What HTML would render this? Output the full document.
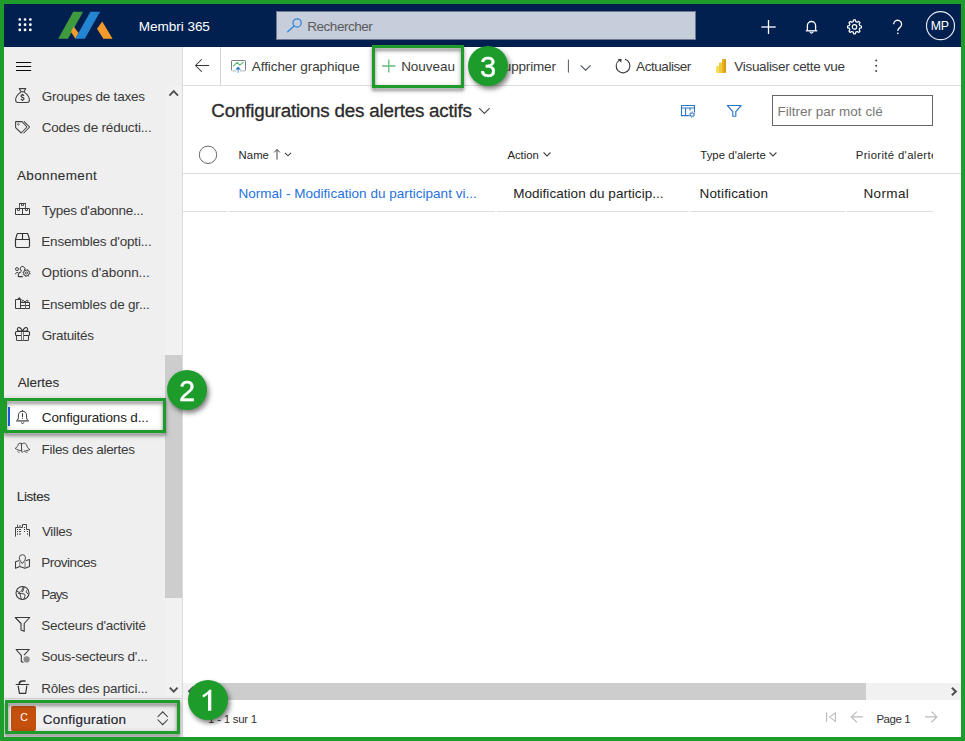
<!DOCTYPE html>
<html><head><meta charset="utf-8">
<style>
*{box-sizing:border-box;margin:0;padding:0}
html,body{width:965px;height:741px;overflow:hidden;background:#1d9c2c;font-family:"Liberation Sans",sans-serif;}
#app{position:absolute;left:0;top:0;width:965px;height:741px;overflow:hidden}
.b{position:absolute}
.t{position:absolute;white-space:nowrap;line-height:20px;height:20px}
svg{position:absolute;overflow:visible}
.badge{position:absolute;width:40px;height:40px;border-radius:50%;background:#1d9c2c;color:#fff;font-size:29px;text-align:center;line-height:42.4px;-webkit-text-stroke:0.35px #fff;will-change:transform;box-shadow:2px 3px 5px rgba(0,0,0,.5)}
.gbox{position:absolute;border:3px solid #1d9c2c;filter:drop-shadow(0.3px 3.2px 1.6px rgba(0,0,0,.3)) drop-shadow(0px 1px 2.5px rgba(0,0,0,.24));}
</style></head><body>
<div id="app">
<div class="b" style="left:4px;top:4px;width:957px;height:733px;background:#fff"></div>
<!-- top bar -->
<div class="b" style="left:4px;top:4px;width:957px;height:43px;background:#011f4f"></div>
<div class="b" style="left:276px;top:11px;width:420px;height:29px;background:#c6cddb;border:1px solid #6f7890"></div>
<!-- sidebar -->
<div class="b" style="left:4px;top:47px;width:178px;height:690px;background:#efefef"></div>
<div class="b" style="left:165px;top:85px;width:17px;height:615px;background:#f1f1f1"></div>
<div class="b" style="left:165px;top:355px;width:17.3px;height:242.6px;background:#cdcdcd"></div><div class="b" style="left:182px;top:47px;width:1px;height:690px;background:rgba(170,170,170,.42)"></div>
<div class="b" style="left:4px;top:698px;width:178px;height:1px;background:#d6d6d6"></div>
<div class="b" style="left:7px;top:401px;width:158px;height:29px;background:#fff"></div>
<div class="b" style="left:8px;top:406.8px;width:2.3px;height:19.2px;background:#1f5ff0"></div>
<div class="b" style="left:11px;top:706.2px;width:24.8px;height:24.6px;background:#c4500c;border-radius:2px"></div>
<!-- command bar -->
<div class="b" style="left:183px;top:85px;width:778px;height:1px;background:#dedede"></div>
<div class="b" style="left:220px;top:47px;width:1px;height:38px;background:#d4d4d4"></div>
<!-- grid -->
<div class="b" style="left:772px;top:95px;width:161px;height:31px;border:1px solid #666;background:#fff"></div>
<div class="b" style="left:183px;top:173px;width:778px;height:1px;background:#dcdcdc"></div>
<div class="b" style="left:183px;top:211px;width:750px;height:1px;background:#e0dedc"></div><div class="b" style="left:227px;top:211px;width:2px;height:1px;background:#fbfbfb"></div><div class="b" style="left:495px;top:211px;width:2px;height:1px;background:#fbfbfb"></div><div class="b" style="left:688px;top:211px;width:2px;height:1px;background:#fbfbfb"></div><div class="b" style="left:845px;top:211px;width:2px;height:1px;background:#fbfbfb"></div>
<!-- h scroll -->
<div class="b" style="left:183px;top:683px;width:778px;height:17px;background:#f1f1f1"></div>
<div class="b" style="left:200px;top:683px;width:666px;height:17px;background:#cdcdcd"></div>
<svg style="left:0px;top:0px" width="60" height="47" viewBox="0 0 60 47" ><rect x="18.45" y="18.15" width="2.6" height="2.6" rx="1.0" fill="#fff"/><rect x="18.45" y="23.35" width="2.6" height="2.6" rx="1.0" fill="#fff"/><rect x="18.45" y="28.55" width="2.6" height="2.6" rx="1.0" fill="#fff"/><rect x="23.75" y="18.15" width="2.6" height="2.6" rx="1.0" fill="#fff"/><rect x="23.75" y="23.35" width="2.6" height="2.6" rx="1.0" fill="#fff"/><rect x="23.75" y="28.55" width="2.6" height="2.6" rx="1.0" fill="#fff"/><rect x="29.05" y="18.15" width="2.6" height="2.6" rx="1.0" fill="#fff"/><rect x="29.05" y="23.35" width="2.6" height="2.6" rx="1.0" fill="#fff"/><rect x="29.05" y="28.55" width="2.6" height="2.6" rx="1.0" fill="#fff"/></svg>
<svg style="left:0px;top:0px" width="130" height="47" viewBox="0 0 130 47" ><polygon points="58.2,38.8 73.2,11.8 83.1,11.8 68,38.8" fill="#3f9a3d"/>
<polygon points="71,32 73.6,26.5 78.6,33 75.4,38.8" fill="#f39a2c"/>
<polygon points="75.2,38.8 90.4,11.8 100.1,11.8 84.8,38.8" fill="#2384d1"/>
<polygon points="102.2,21.6 112.6,38.8 103.4,38.8 97,28.8" fill="#f39a2c"/></svg>
<svg style="left:285px;top:17px" width="20" height="20" viewBox="0 0 20 20" ><circle cx="12.1" cy="5.9" r="4.1" fill="none" stroke="#2f86dc" stroke-width="1.25"/><path d="M9.1 8.9 L2.7 14.7" stroke="#2f86dc" stroke-width="1.3" stroke-linecap="round"/></svg>
<svg style="left:758px;top:17px" width="22" height="22" viewBox="0 0 22 22" ><path d="M10.5 3 V17" stroke="#fff" stroke-width="1.3"/><path d="M3.3 10 H17.7" stroke="#fff" stroke-width="1.3"/></svg>
<svg style="left:801px;top:16px" width="22" height="22" viewBox="0 0 22 22" ><path d="M6.4 14.6 V9.6 a4.1 4.1 0 0 1 8.2 0 V14.6" fill="none" stroke="#fff" stroke-width="1.3"/><path d="M4.8 14.8 H16.3" stroke="#fff" stroke-width="1.3"/><path d="M9 15.6 a1.55 1.55 0 0 0 3.1 0" fill="none" stroke="#fff" stroke-width="1.2"/></svg>
<svg style="left:844px;top:16px" width="22" height="22" viewBox="0 0 22 22" ><path d="M15.75 9.64 L17.44 9.97 L17.44 11.83 L15.75 12.16 L15.10 13.72 L16.06 15.15 L14.75 16.46 L13.32 15.50 L11.76 16.15 L11.43 17.84 L9.57 17.84 L9.24 16.15 L7.68 15.50 L6.25 16.46 L4.94 15.15 L5.90 13.72 L5.25 12.16 L3.56 11.83 L3.56 9.97 L5.25 9.64 L5.90 8.08 L4.94 6.65 L6.25 5.34 L7.68 6.30 L9.24 5.65 L9.57 3.96 L11.43 3.96 L11.76 5.65 L13.32 6.30 L14.75 5.34 L16.06 6.65 L15.10 8.08 Z" fill="none" stroke="#fff" stroke-width="1.2" stroke-linejoin="round"/><circle cx="10.5" cy="10.9" r="2.2" fill="none" stroke="#fff" stroke-width="1.2"/></svg>
<svg style="left:888px;top:16px" width="20" height="22" viewBox="0 0 20 22" ><path d="M5.6 8.2 a4 4 0 1 1 6.2 3.4 c-1.5 1 -2 1.6 -2 3.4" fill="none" stroke="#fff" stroke-width="1.3"/><rect x="9.1" y="16.6" width="1.4" height="1.5" fill="#fff"/></svg>
<svg style="left:924px;top:9px" width="34" height="34" viewBox="0 0 34 34" ><circle cx="16.5" cy="16.7" r="14" fill="none" stroke="#e4e7ee" stroke-width="1.2"/></svg>
<svg style="left:190px;top:55px" width="24" height="22" viewBox="0 0 24 22" ><path d="M5.6 10.5 H18.7 M11.5 4.5 L5.5 10.5 L11.5 16.5" fill="none" stroke="#333" stroke-width="1.05" stroke-linecap="round" stroke-linejoin="round"/></svg>
<svg style="left:229px;top:57px" width="20" height="20" viewBox="0 0 20 20" ><path d="M3.1 13.5 Q2.5 13.5 2.5 12.9 V4.1 Q2.5 3.5 3.1 3.5 H15.9 Q16.5 3.5 16.5 4.1 V12.9 Q16.5 13.5 15.9 13.5" fill="none" stroke="#7d7d7d" stroke-width="1"/><path d="M3.4 13.8 H7.2 M11 13.8 H15.6" stroke="#c2c2c2" stroke-width="1.3"/><path d="M4.1 9.4 L8.2 5.4 L10.8 8.2 L14.6 5.1" fill="none" stroke="#4cb86e" stroke-width="1.05" stroke-linejoin="round"/><rect x="8.5" y="11.6" width="1.3" height="4.3" fill="#7ab2e8"/><path d="M9.15 9.7 L11.4 12.3 H6.9 Z" fill="#2f74c4" stroke="#2f74c4" stroke-width="0.5" stroke-linejoin="round"/></svg>
<svg style="left:380px;top:57px" width="18" height="18" viewBox="0 0 18 18" ><path d="M8.8 2.4 V15.6 M2.2 9 H15.4" stroke="#62bb7a" stroke-width="1.3" fill="none"/></svg>
<svg style="left:564px;top:55px" width="30" height="22" viewBox="0 0 30 22" ><path d="M4.4 4.6 V17.6" stroke="#555" stroke-width="1"/><path d="M16.6 10.4 L21.6 15.2 L26.6 10.4" fill="none" stroke="#4a5262" stroke-width="1.1"/></svg>
<svg style="left:613px;top:56px" width="20" height="20" viewBox="0 0 20 20" ><path d="M11.9 3.3 A6.9 6.9 0 1 1 6.4 4.1" fill="none" stroke="#363636" stroke-width="1.08"/><path d="M4.7 3 L8.5 3 L8.3 6.7 Z" fill="#363636"/></svg>
<svg style="left:714px;top:57px" width="14" height="18" viewBox="0 0 14 18" ><defs><linearGradient id="pb1" x1="0" x2="1" y1="0" y2="0"><stop offset="0" stop-color="#ebb822"/><stop offset="1" stop-color="#d8960c"/></linearGradient></defs><rect x="2" y="9" width="4.2" height="6.9" rx="0.7" fill="#f6dc62"/><rect x="5" y="5.4" width="4.1" height="10.5" rx="0.7" fill="#f2ca3e"/><rect x="8" y="1.9" width="4" height="14" rx="0.8" fill="url(#pb1)"/></svg>
<svg style="left:872.5px;top:58.4px" width="8" height="16" viewBox="0 0 8 16" ><circle cx="3.2" cy="2.6" r="1" fill="#444"/><circle cx="3.2" cy="7.8" r="1" fill="#444"/><circle cx="3.2" cy="13" r="1" fill="#444"/></svg>
<svg style="left:14px;top:58px" width="20" height="16" viewBox="0 0 20 16" ><rect x="2" y="4" width="15.2" height="1" fill="#0a0a0a"/><rect x="2" y="8" width="15.2" height="1" fill="#0a0a0a"/><rect x="2" y="12" width="15.2" height="1" fill="#0a0a0a"/></svg>
<svg style="left:167px;top:87px" width="14" height="12" viewBox="0 0 14 12" ><path d="M2.4 8.6 L6.7 4.2 L11 8.6" fill="none" stroke="#505050" stroke-width="1.9"/></svg>
<svg style="left:167px;top:684px" width="14" height="12" viewBox="0 0 14 12" ><path d="M2.8 3.6 L6.7 7.6 L10.6 3.6" fill="none" stroke="#505050" stroke-width="1.9"/></svg>
<svg style="left:13px;top:86px" width="20" height="20" viewBox="0 0 20 20" ><path d="M6.2 2.6 H12.8 L11 5.8 H8 Z" fill="none" stroke="#404040" stroke-width="1.05" stroke-linejoin="round" stroke-linecap="round"/><path d="M8 5.8 C5 8 2.6 11.4 2.6 14 C2.6 15.8 3.6 16.4 5 16.4 H14 C15.4 16.4 16.4 15.8 16.4 14 C16.4 11.4 14 8 11 5.8" fill="none" stroke="#404040" stroke-width="1.05" stroke-linejoin="round" stroke-linecap="round"/><path d="M10.9 9.9 C10.6 9.1 10 8.9 9.4 8.9 C8.4 8.9 8 9.5 8 10.1 C8 10.9 8.6 11.2 9.5 11.4 C10.4 11.6 11 12 11 12.8 C11 13.5 10.4 14 9.4 14 C8.6 14 8.1 13.6 7.9 12.9" fill="none" stroke="#333" stroke-width="1.1"/><path d="M9.45 7.9 V9 M9.45 13.9 V15" stroke="#333" stroke-width="1"/></svg>
<svg style="left:13px;top:119px" width="20" height="18" viewBox="0 0 20 18" ><path d="M2.6 2.6 H9 L14 8 L8.2 14 L2.6 8.6 Z" fill="none" stroke="#404040" stroke-width="1.05" stroke-linejoin="round" stroke-linecap="round"/><path d="M11.2 2.6 L16.6 8 L10.8 14" fill="none" stroke="#404040" stroke-width="1.05" stroke-linejoin="round" stroke-linecap="round"/><circle cx="5.4" cy="5.4" r="0.8" fill="none" stroke="#3b3b3b" stroke-width="0.7"/></svg>
<svg style="left:13px;top:201px" width="20" height="16" viewBox="0 0 20 16" ><path d="M6.5 7 V2.5 H12.5 V7" fill="none" stroke="#5a5a5a" stroke-width="1"/><path d="M6 2.5 H13" fill="none" stroke="#3c3c3c" stroke-width="1"/><path d="M2.5 7.5 H16.5 V13.5 H2.5 Z M9.5 7.5 V13.5" fill="none" stroke="#3c3c3c" stroke-width="1"/><path d="M8.5 3 V4.5 H10.5 V3 M4.5 8 V9.5 H6.5 V8 M12.5 8 V9.5 H14.5 V8" fill="none" stroke="#4a4a4a" stroke-width="1"/></svg>
<svg style="left:13px;top:231px" width="20" height="20" viewBox="0 0 20 20" ><path d="M2.5 8.5 L4 3.3 Q4.2 2.5 5 2.5 H14 Q14.8 2.5 15 3.3 L16.5 8.5 V15 Q16.5 16.5 15 16.5 H4 Q2.5 16.5 2.5 15 Z M2.5 8.5 H16.5 M9.5 2.5 V8.5" fill="none" stroke="#333" stroke-width="1.15" stroke-linejoin="round"/></svg>
<svg style="left:13px;top:264px" width="20" height="16" viewBox="0 0 20 16" ><circle cx="4.0" cy="5.1" r="1.5" fill="none" stroke="#3b3b3b" stroke-width="0.95"/><path d="M2.3 9.9 Q2.7 8.3 4.8 8.3" fill="none" stroke="#3b3b3b" stroke-width="0.95" stroke-linecap="round"/><path d="M11.2 6.3 A2.3 2.3 0 1 0 9.0 7.0" fill="none" stroke="#3b3b3b" stroke-width="1"/><path d="M9.8 12.6 H5.3 V10.6 Q5.5 8.5 8.2 7.8" fill="none" stroke="#3b3b3b" stroke-width="1.05" stroke-linejoin="round"/><circle cx="13.5" cy="9" r="2.9" fill="#efefef" stroke="#3b3b3b" stroke-width="0.95"/><circle cx="13.5" cy="9" r="3.6" fill="none" stroke="#3b3b3b" stroke-width="0.8" stroke-dasharray="1.25 1.58"/><circle cx="13.5" cy="9" r="1.1" fill="none" stroke="#3b3b3b" stroke-width="0.85"/></svg>
<svg style="left:13px;top:295px" width="20" height="16" viewBox="0 0 20 16" ><path d="M2.5 13.5 V4.5 H7.5 V13.5 M2.5 13.5 H16.5" fill="none" stroke="#3c3c3c" stroke-width="1"/><path d="M3.6 4.7 L6.2 2.1 L9 5 Z" fill="#444"/><path d="M7.5 7.5 H16.5 V13.5 M7.5 10.5 H16.5" fill="none" stroke="#3c3c3c" stroke-width="1"/><path d="M12.5 7.5 V13.5" fill="none" stroke="#6a6a6a" stroke-width="1"/><path d="M12 7.3 C11 5 9 4.8 8.8 6 C8.7 6.8 9.5 7.3 12 7.3 C13 5 15 4.8 15.2 6 C15.3 6.8 14.5 7.3 12 7.3" fill="none" stroke="#3c3c3c" stroke-width="1"/></svg>
<svg style="left:13px;top:325px" width="20" height="20" viewBox="0 0 20 20" ><path d="M3.5 6.5 H15.5 Q16.5 6.5 16.5 7.5 V9.5 Q16.5 10.5 15.5 10.5 H11 M8 10.5 H3.5 Q2.5 10.5 2.5 9.5 V7.5 Q2.5 6.5 3.5 6.5" fill="none" stroke="#333" stroke-width="1.1"/><path d="M3.5 10.5 V14.5 Q3.5 15.5 4.5 15.5 H14.5 Q15.5 15.5 15.5 14.5 V10.5" fill="none" stroke="#444" stroke-width="1.05"/><path d="M8.5 6.5 V15.5 M10.5 6.5 V15.5" fill="none" stroke="#757575" stroke-width="1"/><path d="M9.5 6.3 C8.5 4 7 2.3 5.8 2.5 C4.4 2.8 4 4.6 4.6 5.4 C5.2 6.2 6.5 6.4 9.5 6.3 M9.5 6.3 C10.5 4 12 2.3 13.2 2.5 C14.6 2.8 15 4.6 14.4 5.4 C13.8 6.2 12.5 6.4 9.5 6.3" fill="none" stroke="#333" stroke-width="1.05"/></svg>
<svg style="left:13px;top:408px" width="20" height="18" viewBox="0 0 20 18" ><path d="M3.9 12.4 C5 11.8 5.4 10.8 5.4 9.6 V7.4 a4.1 4.1 0 0 1 8.2 0 V9.6 C13.6 10.8 14 11.8 15.1 12.4" fill="none" stroke="#454545" stroke-width="1.05" stroke-linejoin="round"/><path d="M3.7 12.9 H15.3" stroke="#7a7a7a" stroke-width="1.6" stroke-linecap="round"/><path d="M8.3 14.3 a1.25 1.25 0 0 0 2.5 0" fill="none" stroke="#454545" stroke-width="1"/><path d="M9.5 5.3 V9.0" stroke="#333" stroke-width="1.1"/><circle cx="9.5" cy="10.3" r="0.6" fill="#333"/><path d="M9.5 2.1 V3.4" stroke="#454545" stroke-width="1"/></svg>
<svg style="left:13px;top:440px" width="20" height="16" viewBox="0 0 20 16" ><path d="M8.4 3.4 C6.6 2.6 5.2 3.6 4.8 5.4 C4.4 7 3.6 7.8 2.1 8.4 C3.6 9.6 5.8 10.2 7.9 10.7 M8.3 3.4 C8.4 6 8.5 9 8.7 11.5 M8.5 5.2 C8.8 3.6 10 2.9 11.3 3.1 C13 3.4 13.6 4.8 14 6.2 C14.5 7.8 15.4 8.8 16.9 9.5 C15.4 10.4 13 10.9 10.9 11.2" fill="none" stroke="#484848" stroke-width="1" stroke-linejoin="round" stroke-linecap="round"/><path d="M4.6 11.6 Q5.2 12.6 6.3 12.2 M12.4 12 Q13.2 12.8 14.3 12.3" fill="none" stroke="#555" stroke-width="0.9" stroke-linecap="round"/><circle cx="9.4" cy="12.2" r="0.6" fill="#555"/></svg>
<svg style="left:13px;top:522px" width="20" height="18" viewBox="0 0 20 18" ><path d="M2.5 14.6 V5.5 H9.5 V2.5 H13.5 V7.5 H16.5 V14.6" fill="none" stroke="#454545" stroke-width="1"/><path d="M4.5 5.5 V2.6" stroke="#5a5a5a" stroke-width="1"/><path d="M6.5 5.5 V3.2 M7.7 5.5 V3.2" stroke="#8a8a8a" stroke-width="1"/><rect x="4" y="7" width="1" height="1" fill="#333"/><rect x="4" y="9" width="1" height="1" fill="#333"/><rect x="4" y="11" width="1" height="2" fill="#777"/><rect x="6" y="7" width="2" height="1" fill="#555"/><rect x="6" y="9" width="2" height="1" fill="#555"/><rect x="6" y="11" width="2" height="2" fill="#999"/><rect x="11" y="5" width="1" height="1" fill="#333"/><rect x="11" y="7" width="1" height="1" fill="#333"/><rect x="11" y="9" width="1" height="1" fill="#444"/><rect x="14" y="9" width="1" height="1" fill="#333"/><rect x="14" y="11" width="1" height="2" fill="#777"/></svg>
<svg style="left:13px;top:553px" width="20" height="18" viewBox="0 0 20 18" ><path d="M6.4 7.6 L2.5 8.7 V15.3 L6.8 13.4 L12 15.2 L16.5 13.6 V6.6 L12.6 7.7" fill="none" stroke="#404040" stroke-width="1.05" stroke-linejoin="round"/><path d="M6.8 8.6 V13.4 M12 8.6 V15.2" stroke="#7a7a7a" stroke-width="1"/><path d="M9.4 10.6 C7.8 8.4 6.3 6.6 6.3 4.8 A3.1 3.1 0 0 1 12.5 4.8 C12.5 6.6 11 8.4 9.4 10.6 Z" fill="#efefef" stroke="#4a4a4a" stroke-width="1"/></svg>
<svg style="left:13px;top:583px" width="20" height="20" viewBox="0 0 20 20" ><circle cx="9.5" cy="10" r="6.5" fill="none" stroke="#3b3b3b" stroke-width="1.1"/><path d="M10.2 3.8 C9.6 6.4 8.6 8 7 9.4 C5.6 9.3 4.4 8.7 3.3 7.8 M11.2 4 C10.6 6 10.2 7.6 9.3 9.2 M5 10.3 C7.5 10.7 9.6 10.3 11.7 11.3 C12.5 12.6 11.5 14.6 10.7 16.3 M6.8 10.7 C7.4 12.6 8 14.6 8.3 16.3 M13.7 7.4 C12.8 8.5 13 10 15.2 10.7" fill="none" stroke="#3b3b3b" stroke-width="1"/></svg>
<svg style="left:13px;top:615px" width="20" height="20" viewBox="0 0 20 20" ><path d="M2.3 2.5 H16.7 L11.2 8.5 V16.3 L8 14.9 V8.5 Z" fill="none" stroke="#383838" stroke-width="1.1" stroke-linejoin="round"/></svg>
<svg style="left:13px;top:647px" width="20" height="20" viewBox="0 0 20 20" ><path d="M11 8.2 L16.2 2.5 H3 L8.3 8.4 V14.4 L10.4 15.6" fill="none" stroke="#383838" stroke-width="1.1" stroke-linejoin="round"/><circle cx="13.6" cy="12.4" r="3.1" fill="#8c8c8c"/></svg>
<svg style="left:13px;top:678px" width="20" height="18" viewBox="0 0 20 18" ><path d="M3.2 6.45 H15.7" stroke="#333" stroke-width="1.15" stroke-linecap="round"/><path d="M6.2 6.2 C6.2 4 7.6 3.1 9.4 3.05 H12" fill="none" stroke="#333" stroke-width="1.5" stroke-linecap="round"/><path d="M5.2 8.2 L6.4 15 Q6.5 15.4 7 15.4 H12.2 Q12.7 15.4 12.8 15 L13.8 8.2" fill="none" stroke="#333" stroke-width="1.2" stroke-linecap="round"/></svg>
<svg style="left:155px;top:709px" width="16" height="20" viewBox="0 0 16 20" ><path d="M2.6 8 L7.7 2.8 L12.8 8 M2.6 10.5 L7.7 15.7 L12.8 10.5" fill="none" stroke="#3b3b3b" stroke-width="1.05"/></svg>
<svg style="left:476px;top:104px" width="16" height="14" viewBox="0 0 16 14" ><path d="M3.2 4.2 L8.4 9.4 L13.6 4.2" fill="none" stroke="#444" stroke-width="1.05"/></svg>
<svg style="left:678px;top:102px" width="20" height="18" viewBox="0 0 20 18" ><path d="M11.4 13.6 H3.5 V3.5 H16.5 V10.6 M3.5 6 H16.5 M7.6 6 V13.6 M12 6 V8.6" fill="none" stroke="#2d76c4" stroke-width="1.1"/><circle cx="14" cy="12.6" r="1.75" fill="#fff" stroke="#2d76c4" stroke-width="1.0"/><circle cx="14" cy="12.6" r="2.7" fill="none" stroke="#2d76c4" stroke-width="0.9" stroke-dasharray="0.95 1.17"/></svg>
<svg style="left:724px;top:102px" width="20" height="18" viewBox="0 0 20 18" ><path d="M3.4 3.5 H17.2 L11.8 9.6 V14.2 H8.8 V9.6 Z" fill="none" stroke="#2d76c4" stroke-width="1.15" stroke-linejoin="round"/></svg>
<svg style="left:197px;top:144px" width="22" height="22" viewBox="0 0 22 22" ><circle cx="11" cy="10.8" r="8.7" fill="none" stroke="#6a6a6a" stroke-width="1"/></svg>
<svg style="left:270px;top:146px" width="26" height="18" viewBox="0 0 26 18" ><path d="M7 13.6 V3.6 M4.2 6.4 L7 3.4 L9.8 6.4" fill="none" stroke="#444" stroke-width="1"/><path d="M15 6.8 L18 9.8 L21 6.8" fill="none" stroke="#444" stroke-width="1.1"/></svg>
<svg style="left:540px;top:146px" width="14" height="18" viewBox="0 0 14 18" ><path d="M3.6 6.5 L7 9.9 L10.4 6.5" fill="none" stroke="#444" stroke-width="1.1"/></svg>
<svg style="left:766px;top:146px" width="14" height="18" viewBox="0 0 14 18" ><path d="M3.6 6.5 L7 9.9 L10.4 6.5" fill="none" stroke="#444" stroke-width="1.1"/></svg>
<svg style="left:822px;top:708px" width="18" height="18" viewBox="0 0 18 18" ><path d="M4.6 4.4 V13.8" stroke="#bcbcbc" stroke-width="1.2"/><path d="M13.4 4.8 L7.6 9.1 L13.4 13.4 Z" fill="none" stroke="#bcbcbc" stroke-width="1.1" stroke-linejoin="round"/></svg>
<svg style="left:848px;top:708px" width="18" height="18" viewBox="0 0 18 18" ><path d="M3.4 8.9 H14.8 M8.8 3.6 L3.4 8.9 L8.8 14.2" fill="none" stroke="#bcbcbc" stroke-width="1.2"/></svg>
<svg style="left:922px;top:708px" width="18" height="18" viewBox="0 0 18 18" ><path d="M3 8.9 H14.8 M9.4 3.6 L14.8 8.9 L9.4 14.2" fill="none" stroke="#bcbcbc" stroke-width="1.2"/></svg>
<svg style="left:184px;top:684px" width="14" height="14" viewBox="0 0 14 14" ><path d="M9.4 2.8 L5 7.2 L9.4 11.6" fill="none" stroke="#505050" stroke-width="1.9"/></svg>
<svg style="left:946px;top:684px" width="14" height="14" viewBox="0 0 14 14" ><path d="M5.9 3.7 L9.8 7.5 L5.9 11.3" fill="none" stroke="#505050" stroke-width="2.1"/></svg>
<div class="t" id="t_app" style="left:138.83px;top:16.50px;font-size:13.6px;color:#ffffff;letter-spacing:-0.074px;">Membri 365</div>
<div class="t" id="t_search" style="left:307.22px;top:16.60px;font-size:13.5px;color:#5a5a5a;letter-spacing:-0.460px;">Rechercher</div>
<div class="t" id="t_mp" style="left:930.78px;top:15.80px;font-size:12.4px;color:#ffffff;letter-spacing:-0.355px;">MP</div>
<div class="t" id="c_aff" style="left:251.87px;top:57.30px;font-size:13.5px;color:#3a3a3a;letter-spacing:-0.086px;">Afficher graphique</div>
<div class="t" id="c_nou" style="left:401.13px;top:57.30px;font-size:13.5px;color:#3a3a3a;letter-spacing:-0.016px;">Nouveau</div>
<div class="t" id="c_sup" style="left:495.02px;top:57.30px;font-size:13.5px;color:#3a3a3a;letter-spacing:-0.168px;">Supprimer</div>
<div class="t" id="c_act" style="left:636.11px;top:57.30px;font-size:13.5px;color:#3a3a3a;letter-spacing:-0.449px;">Actualiser</div>
<div class="t" id="c_vis" style="left:734.36px;top:57.30px;font-size:13.5px;color:#3a3a3a;letter-spacing:-0.329px;">Visualiser cette vue</div>
<div class="t" id="n1" style="left:41.65px;top:86.60px;font-size:13.5px;color:#3a3a3a;letter-spacing:-0.213px;">Groupes de taxes</div>
<div class="t" id="n2" style="left:41.70px;top:117.50px;font-size:13.5px;color:#3a3a3a;letter-spacing:-0.185px;">Codes de réducti...</div>
<div class="t" id="g1" style="left:16.88px;top:166.20px;font-size:13.5px;color:#2e2e2e;letter-spacing:0.369px;-webkit-text-stroke:0.08px #2e2e2e;">Abonnement</div>
<div class="t" id="n3" style="left:42.04px;top:201.20px;font-size:13.5px;color:#3a3a3a;letter-spacing:-0.279px;">Types d'abonne...</div>
<div class="t" id="n4" style="left:41.23px;top:232.40px;font-size:13.5px;color:#3a3a3a;letter-spacing:-0.177px;">Ensembles d'opti...</div>
<div class="t" id="n5" style="left:41.59px;top:263.00px;font-size:13.5px;color:#3a3a3a;letter-spacing:-0.060px;">Options d'abonn...</div>
<div class="t" id="n6" style="left:41.23px;top:295.00px;font-size:13.5px;color:#3a3a3a;letter-spacing:-0.192px;">Ensembles de gr...</div>
<div class="t" id="n7" style="left:41.65px;top:326.30px;font-size:13.5px;color:#3a3a3a;letter-spacing:-0.310px;">Gratuités</div>
<div class="t" id="g2" style="left:17.71px;top:373.40px;font-size:13.5px;color:#2e2e2e;letter-spacing:-0.088px;-webkit-text-stroke:0.08px #2e2e2e;">Alertes</div>
<div class="t" id="n8" style="left:41.85px;top:408.30px;font-size:13.5px;color:#222;letter-spacing:-0.152px;">Configurations d...</div>
<div class="t" id="n9" style="left:41.58px;top:440.20px;font-size:13.5px;color:#3a3a3a;letter-spacing:-0.308px;">Files des alertes</div>
<div class="t" id="g3" style="left:16.81px;top:486.60px;font-size:13.5px;color:#2e2e2e;letter-spacing:-0.397px;-webkit-text-stroke:0.08px #2e2e2e;">Listes</div>
<div class="t" id="n10" style="left:41.96px;top:521.90px;font-size:13.5px;color:#3a3a3a;letter-spacing:-0.351px;">Villes</div>
<div class="t" id="n11" style="left:41.13px;top:553.10px;font-size:13.5px;color:#3a3a3a;letter-spacing:-0.453px;">Provinces</div>
<div class="t" id="n12" style="left:41.13px;top:585.10px;font-size:13.5px;color:#3a3a3a;letter-spacing:-0.983px;">Pays</div>
<div class="t" id="n13" style="left:41.36px;top:615.80px;font-size:13.5px;color:#3a3a3a;letter-spacing:-0.249px;">Secteurs d'activité</div>
<div class="t" id="n14" style="left:41.36px;top:647.10px;font-size:13.5px;color:#3a3a3a;letter-spacing:-0.277px;">Sous-secteurs d'...</div>
<div class="t" id="n15" style="left:41.13px;top:678.50px;font-size:13.5px;color:#3a3a3a;letter-spacing:-0.220px;">Rôles des partici...</div>
<div class="t" id="n16" style="left:42.85px;top:709.70px;font-size:13.5px;color:#262630;letter-spacing:0.248px;-webkit-text-stroke:0.18px #262630;">Configuration</div>
<div class="t" id="n16c" style="left:20.13px;top:707.10px;font-size:10.5px;color:#ffffff;letter-spacing:0.000px;">C</div>
<div class="t" id="m_title" style="left:211.36px;top:100.90px;font-size:18.8px;color:#2a2a2a;letter-spacing:-0.210px;-webkit-text-stroke:0.3px #2a2a2a;">Configurations des alertes actifs</div>
<div class="t" id="h1" style="left:238.62px;top:145.10px;font-size:11.3px;color:#262626;letter-spacing:0.038px;">Name</div>
<div class="t" id="h2" style="left:507.40px;top:145.10px;font-size:11.3px;color:#262626;letter-spacing:-0.010px;">Action</div>
<div class="t" id="h3" style="left:700.27px;top:145.10px;font-size:11.3px;color:#262626;letter-spacing:0.090px;">Type d'alerte</div>
<div class="t" id="h4" style="left:855.76px;top:145.10px;font-size:11.3px;color:#262626;letter-spacing:0.367px;width:77.24px;overflow:hidden;">Priorité d'alerte</div>
<div class="t" id="r1" style="left:238.40px;top:184.20px;font-size:13.5px;color:#2672de;letter-spacing:0.033px;">Normal - Modification du participant vi...</div>
<div class="t" id="r2" style="left:513.13px;top:184.20px;font-size:13.5px;color:#222;letter-spacing:0.043px;">Modification du particip...</div>
<div class="t" id="r3" style="left:699.58px;top:184.20px;font-size:13.5px;color:#222;letter-spacing:0.142px;">Notification</div>
<div class="t" id="r4" style="left:863.40px;top:184.20px;font-size:13.5px;color:#222;letter-spacing:0.377px;">Normal</div>
<div class="t" id="m_filter" style="left:777.40px;top:101.50px;font-size:13.5px;color:#777;letter-spacing:0.014px;">Filtrer par mot clé</div>
<div class="t" id="f1" style="left:208.07px;top:708.70px;font-size:11.5px;color:#333;letter-spacing:-0.260px;">1 - 1 sur 1</div>
<div class="t" id="f2" style="left:876.38px;top:708.70px;font-size:11.5px;color:#333;letter-spacing:-0.432px;">Page 1</div>
<!-- annotations -->
<div class="gbox" style="left:372px;top:45.4px;width:92px;height:42.6px"></div>
<div class="gbox" style="left:4px;top:398.3px;width:162px;height:34.3px"></div>
<div class="gbox" style="left:5.2px;top:699.8px;width:175px;height:33.8px"></div>
<div class="badge" style="left:467.8px;top:45.8px">3</div>
<div class="badge" style="left:167px;top:370px">2</div>
<div class="badge" style="left:188px;top:680px"></div><svg style="left:0;top:0" width="965" height="741"><path d="M211.3 710.8 H208 V694.2 C206.6 695.6 204.6 696.8 202.7 697.6 V695 C205.6 693.6 208 691.8 209.2 689.8 H211.3 Z" fill="#fff"/></svg>
<!-- frame -->
<div class="b" style="left:0;top:0;width:965px;height:4px;background:#1d9c2c"></div>
<div class="b" style="left:0;top:737px;width:965px;height:4px;background:#1d9c2c"></div>
<div class="b" style="left:0;top:0;width:4px;height:741px;background:#1d9c2c"></div>
<div class="b" style="left:961px;top:0;width:4px;height:741px;background:#1d9c2c"></div>
</div>
</body></html>
